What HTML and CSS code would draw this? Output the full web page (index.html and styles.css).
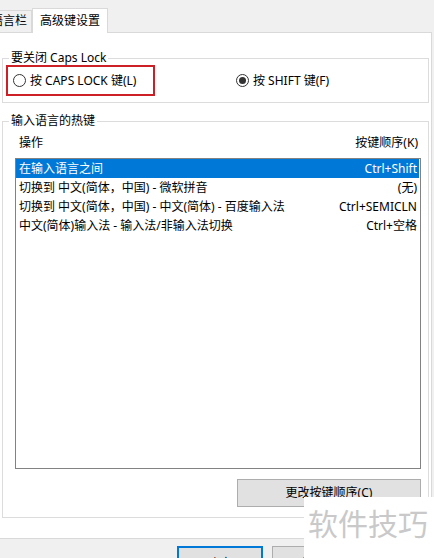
FILE: index.html
```html
<!DOCTYPE html>
<html lang="zh">
<head>
<meta charset="utf-8">
<link rel="stylesheet" href="styles.css">
</head>
<body>
<div class="dialog">
  <div class="tabs">
    <div class="tab">语言栏</div>
    <div class="tab active">高级键设置</div>
  </div>
  <div class="panel">
    <div class="group g1">
      <div class="legend">要关闭 Caps Lock</div>
      <div class="opts">
        <label class="opt mark"><span class="radio"></span><span>按 CAPS LOCK 键(L)</span></label>
        <label class="opt second"><span class="radio on"></span><span>按 SHIFT 键(F)</span></label>
      </div>
    </div>
    <div class="group g2">
      <div class="legend">输入语言的热键</div>
      <div class="heads"><span>操作</span><span>按键顺序(K)</span></div>
      <div class="list">
        <div class="row sel"><span>在输入语言之间</span><span>Ctrl+Shift</span></div>
        <div class="row"><span>切换到 中文(简体，中国) - 微软拼音</span><span>(无)</span></div>
        <div class="row"><span>切换到 中文(简体，中国) - 中文(简体) - 百度输入法</span><span>Ctrl+SEMICLN</span></div>
        <div class="row"><span>中文(简体)输入法 - 输入法/非输入法切换</span><span>Ctrl+空格</span></div>
      </div>
      <div class="actions"><button class="btn change">更改按键顺序(C)</button></div>
    </div>
  </div>
  <div class="footer">
    <button class="btn ok">确定</button>
    <button class="btn cancel">取消</button>
  </div>
  <div class="watermark">软件技巧</div>
</div>
</body>
</html>
```

FILE: styles.css
```css
* { box-sizing: border-box; }
html, body { margin: 0; padding: 0; }
body {
  width: 434px;
  height: 558px;
  overflow: hidden;
  background: #f0f0f0;
  font-family: "Noto Sans", "Noto Sans CJK SC", sans-serif;
  font-size: 12px;
  color: #000;
}
.dialog { position: relative; width: 434px; height: 558px; }
.tabs {
  height: 32px;
  display: flex;
  align-items: flex-end;
  margin-left: -15px;
  position: relative;
  z-index: 2;
}
.tab {
  height: 22px;
  line-height: 20px;
  padding: 0 4px 0 5px;
  border: 1px solid #d9d9d9;
  border-bottom: none;
  background: #f0f0f0;
  white-space: nowrap;
}
.tab.active {
  height: 25px;
  margin-bottom: -1px;
  background: #fff;
  padding: 0 6px 0 7px;
  width: 76px;
  line-height: 23px;
}
.panel {
  position: relative;
  z-index: 1;
  margin-left: -1px;
  width: 433px;
  height: 507px;
  background: #fff;
  border: 1px solid #d9d9d9;
  padding-top: 25px;
}
.group {
  margin-left: 2px;
  width: 427px;
  border: 1px solid #dcdcdc;
}
.legend {
  margin: -9px 0 0 6px;
  padding: 0 2px;
  width: fit-content;
  background: #fff;
  line-height: 16px;
  height: 16px;
  white-space: nowrap;
}
.g1 { height: 45px; }
.opts {
  display: flex;
  align-items: center;
  margin-top: -1px;
}
.opt {
  display: flex;
  align-items: center;
  gap: 4px;
  line-height: 16px;
  white-space: nowrap;
}
.mark {
  margin-left: 3px;
  width: 149px;
  height: 31px;
  border: 2px solid #cc1f26;
  padding-left: 5px;
}
.second { margin-left: 81px; }
.radio {
  width: 13px;
  height: 13px;
  border: 1px solid #333;
  border-radius: 50%;
  display: inline-flex;
  align-items: center;
  justify-content: center;
  flex: none;
  background: #fff;
}
.radio.on::after {
  content: "";
  width: 7px;
  height: 7px;
  border-radius: 50%;
  background: #333;
}
.g2 {
  margin-top: 18px;
  height: 397px;
}
.heads {
  display: flex;
  justify-content: space-between;
  line-height: 16px;
  margin-top: 6px;
  padding: 0 10px 0 16px;
}
.list {
  margin: 7px 0 0 12px;
  width: 406px;
  height: 311px;
  border: 1px solid #828282;
  padding-right: 1px;
}
.row {
  display: flex;
  justify-content: space-between;
  height: 19px;
  line-height: 19px;
  padding: 0 2px 0 3px;
  white-space: nowrap;
}
.row.sel { background: #0078d7; color: #fff; }
.actions {
  display: flex;
  justify-content: flex-end;
  padding-right: 7px;
  margin-top: 10px;
}
.btn {
  font: inherit;
  color: #000;
  background: #e1e1e1;
  border: 1px solid #adadad;
  padding: 0;
  margin: 0;
}
.change {
  width: 184px;
  height: 28px;
  line-height: 26px;
}
.footer {
  display: flex;
  gap: 9px;
  padding: 7px 0 0 177px;
}
.ok, .cancel {
  width: 86px;
  height: 26px;
  padding-top: 8px;
  line-height: 16px;
  display: block;
  text-align: center;
}
.ok { border: 2px solid #0078d7; }
.watermark {
  position: absolute;
  left: 304px;
  top: 497px;
  width: 130px;
  height: 61px;
  background: #fff;
  color: #c9c9c9;
  font-family: "Noto Sans CJK SC", sans-serif;
  font-size: 30px;
  line-height: 50px;
  padding-left: 4px;
  z-index: 5;
  white-space: nowrap;
}
```
